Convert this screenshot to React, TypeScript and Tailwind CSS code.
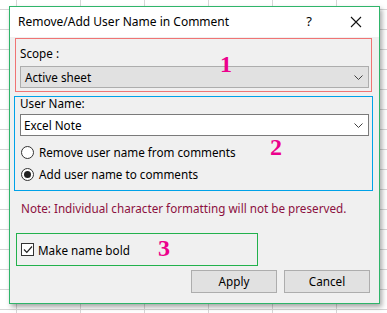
const font = { fontFamily: '"Noto Sans", "Open Sans", Arial, sans-serif' };

function Chevron() {
  return (
    <svg width="9" height="5" viewBox="0 0 9 5" className="shrink-0">
      <path d="M0.5 0.5 L4.5 4.5 L8.5 0.5" fill="none" stroke="#404040" strokeWidth="1" />
    </svg>
  );
}

function Radio({ checked, label }: { checked?: boolean; label: string }) {
  return (
    <div className="flex h-[20px] items-center gap-[5px]">
      <span className="grid h-[13px] w-[13px] place-items-center rounded-full border border-[#333] bg-white">
        {checked && <span className="h-[7px] w-[7px] rounded-full bg-[#222]" />}
      </span>
      <span className="text-[11.7px] leading-[14px] text-black">{label}</span>
    </div>
  );
}

function Tag({ n, className }: { n: string; className: string }) {
  return (
    <span
      className={`absolute text-[24px] font-bold leading-none text-[#ec008c] ${className}`}
      style={{ fontFamily: '"Liberation Serif", "Times New Roman", serif' }}
    >
      {n}
    </span>
  );
}

export default function App() {
  return (
    <div
      className="h-[313px] w-[387px] overflow-hidden bg-white bg-[linear-gradient(to_right,#d6d6d6_1px,transparent_1px),linear-gradient(to_bottom,#d6d6d6_1px,transparent_1px)] bg-size-[64px_20px] bg-position-[16px_9px] pl-[9px] pt-[6px]"
      style={font}
    >
      <div className="flex h-[298px] w-[371px] flex-col border border-[#2fb56a] bg-[#f0f0f0] shadow-[2px_3px_5px_rgba(0,0,0,0.35)]">
        <div className="flex h-[30px] shrink-0 items-center bg-white pl-[8px] pr-[17px]">
          <span className="text-[12px] text-black">Remove/Add User Name in Comment</span>
          <span className="ml-auto mr-[38px] text-[13px] text-black">?</span>
          <svg width="12" height="12" viewBox="0 0 12 12">
            <path d="M1 1 L11 11 M11 1 L1 11" stroke="#111" strokeWidth="1.1" />
          </svg>
        </div>

        <div className="relative flex flex-col">
          <div className="ml-[5px] mt-[1px] flex h-[54px] w-[357px] flex-col border border-[#f07474] px-[4px] pt-[7px]">
            <span className="text-[11.7px] leading-[14px] text-black">Scope :</span>
            <div className="mt-[6px] flex h-[22px] w-[349px] items-center justify-between border border-[#adadad] bg-[#e1e1e1] pl-[4px] pr-[5px]">
              <span className="text-[11.7px] leading-[14px] text-black">Active sheet</span>
              <Chevron />
            </div>
          </div>

          <div className="ml-[4px] mt-[4px] flex h-[95px] w-[359px] flex-col border border-[#00a2e8] pl-[5px]">
            <span className="text-[11.7px] leading-[12px] text-black">User Name:</span>
            <div className="mt-[5px] flex h-[22px] w-[349px] items-center justify-between border border-[#7a7a7a] bg-white pl-[3px] pr-[5px]">
              <span className="text-[11.7px] leading-[14px] text-black">Excel Note</span>
              <Chevron />
            </div>
            <div className="ml-[1px] mt-[6px]">
              <Radio label="Remove user name from comments" />
            </div>
            <div className="ml-[1px] mt-[2px]">
              <Radio checked label="Add user name to comments" />
            </div>
          </div>

          <span className="ml-[11px] mt-[10px] text-[11.7px] leading-[14px] text-[#8c1040]">
            Note: Individual character formatting will not be preserved.
          </span>

          <div className="ml-[6px] mt-[18px] flex h-[33px] w-[242px] items-center border border-[#22b14c] pl-[4px]">
            <span className="grid h-[13px] w-[13px] place-items-center border border-[#333] bg-white">
              <svg width="10" height="9" viewBox="0 0 10 9">
                <path d="M1 4.5 L3.8 7.3 L9 1.5" fill="none" stroke="#222" strokeWidth="1.2" />
              </svg>
            </span>
            <span className="ml-[4px] text-[11.7px] leading-[14px] text-black">Make name bold</span>
          </div>

          <div className="mt-[4px] flex justify-end gap-[7px] pr-[9px]">
            <button className="h-[23px] w-[86px] border border-[#adadad] bg-[#e1e1e1] text-[11.7px] text-black">
              Apply
            </button>
            <button className="h-[23px] w-[86px] border border-[#adadad] bg-[#e1e1e1] text-[11.7px] text-black">
              Cancel
            </button>
          </div>

          <Tag n="1" className="left-[210px] top-[15px]" />
          <Tag n="2" className="left-[260px] top-[98px]" />
          <Tag n="3" className="left-[148px] top-[199px]" />
        </div>
      </div>
    </div>
  );
}
